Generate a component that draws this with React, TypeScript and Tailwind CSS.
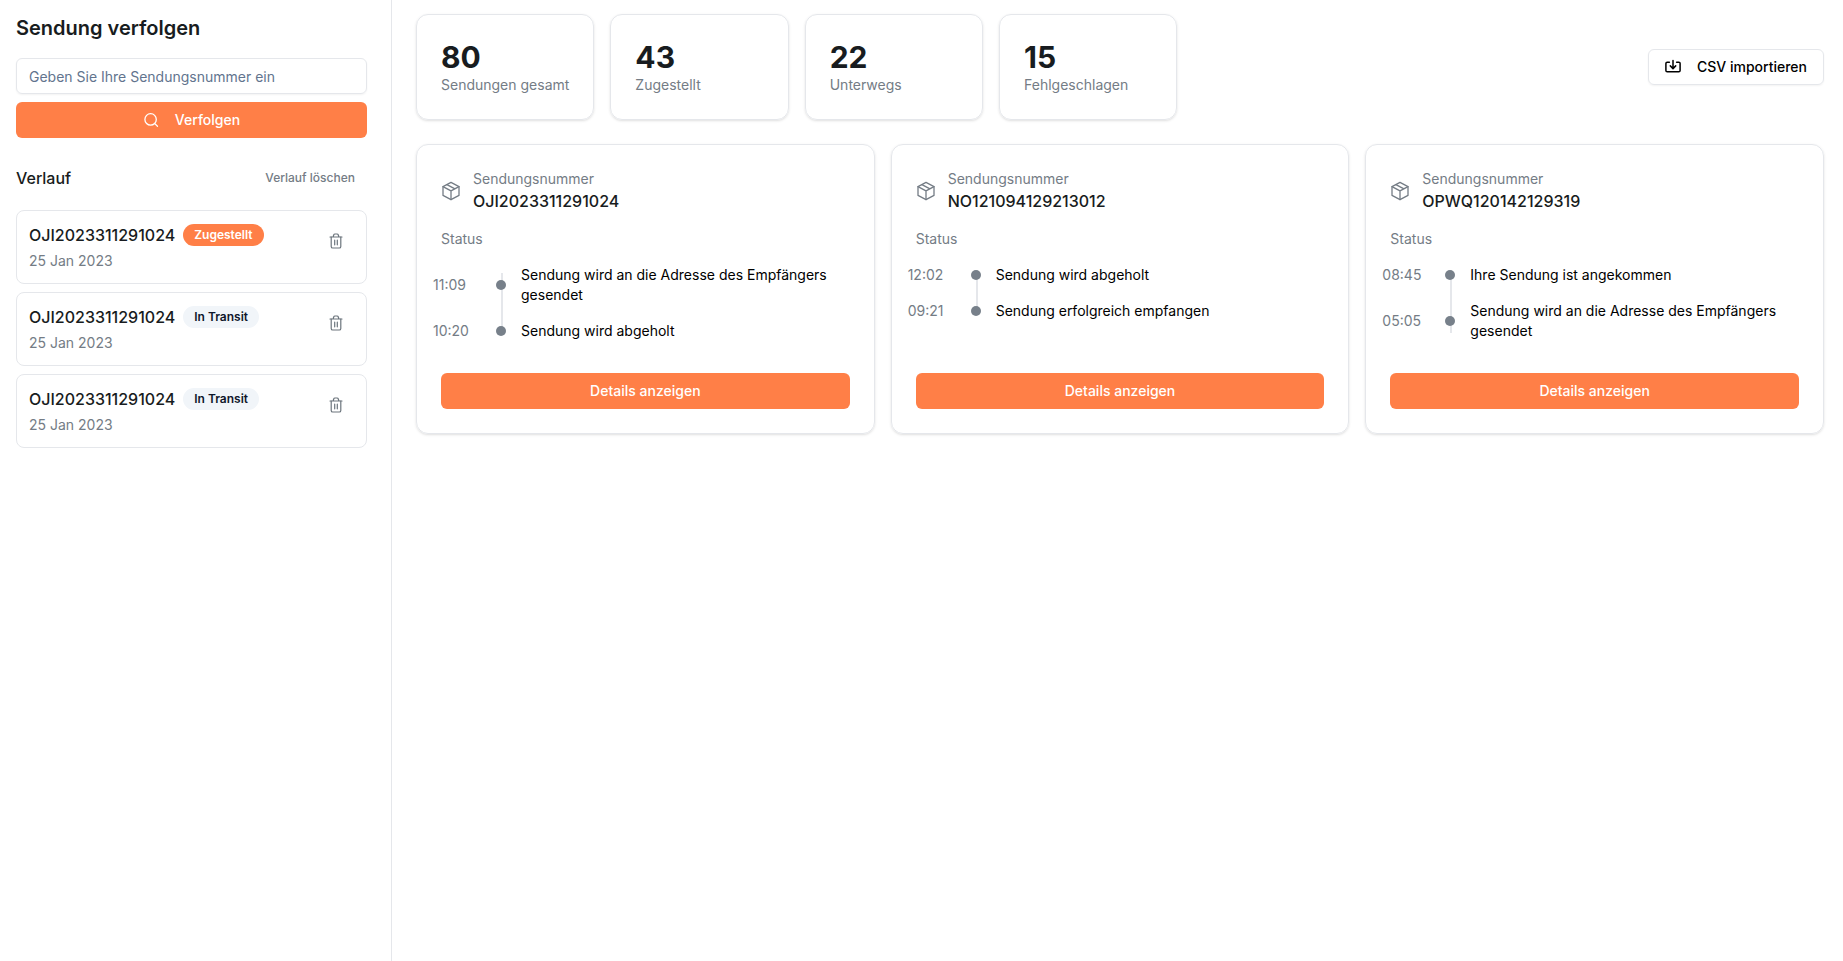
import { useState } from "react";

const stats = [
  { value: 80, label: "Sendungen gesamt" },
  { value: 43, label: "Zugestellt" },
  { value: 22, label: "Unterwegs" },
  { value: 15, label: "Fehlgeschlagen" },
];

const initialHistory = [
  { id: 1, number: "OJI2023311291024", date: "25 Jan 2023", status: "Zugestellt" },
  { id: 2, number: "OJI2023311291024", date: "25 Jan 2023", status: "In Transit" },
  { id: 3, number: "OJI2023311291024", date: "25 Jan 2023", status: "In Transit" },
];

const shipments = [
  {
    number: "OJI2023311291024",
    events: [
      { time: "11:09", text: "Sendung wird an die Adresse des Empfängers gesendet" },
      { time: "10:20", text: "Sendung wird abgeholt" },
    ],
  },
  {
    number: "NO121094129213012",
    events: [
      { time: "12:02", text: "Sendung wird abgeholt" },
      { time: "09:21", text: "Sendung erfolgreich empfangen" },
    ],
  },
  {
    number: "OPWQ120142129319",
    events: [
      { time: "08:45", text: "Ihre Sendung ist angekommen" },
      { time: "05:05", text: "Sendung wird an die Adresse des Empfängers gesendet" },
    ],
  },
];

function SearchIcon() {
  return (
    <svg className="size-4" viewBox="0 0 16 16" fill="none" stroke="currentColor" strokeWidth="1.3" strokeLinecap="round">
      <circle cx="7.6" cy="7.4" r="5.7" />
      <path d="m11.8 11.6 2.7 2.7" />
    </svg>
  );
}

function ImportIcon() {
  return (
    <svg className="size-4" viewBox="0 0 16 16" fill="none" stroke="currentColor" strokeWidth="1.5" strokeLinecap="round" strokeLinejoin="round">
      <path d="M4.4 3.2H2.2c-.8 0-1.3.5-1.3 1.3v7c0 .8.5 1.3 1.3 1.3h11.6c.8 0 1.3-.5 1.3-1.3v-7c0-.8-.5-1.3-1.3-1.3h-2.2" />
      <path d="M8 1.6v7.8M5.3 6.9 8 9.6l2.7-2.7" />
    </svg>
  );
}

function PackageIcon() {
  return (
    <svg className="size-5 text-[#747c85]" viewBox="0 0 20 20" fill="none" stroke="currentColor" strokeWidth="1.3" strokeLinejoin="round" strokeLinecap="round">
      <path d="M10 1.4 18 5.6v8.8L10 18.6 2 14.4V5.6z" />
      <path d="M2 5.6 10 9.8l8-4.2M10 9.8v8.8M5.9 3.6l8.1 4.2" />
    </svg>
  );
}

function TrashIcon() {
  return (
    <svg className="size-4" viewBox="0 0 16 16" fill="none" stroke="currentColor" strokeWidth="1.2" strokeLinecap="round" strokeLinejoin="round">
      <path d="M2 4h12M5.1 4l.6-2c.2-.7.6-1 1.3-1h2c.7 0 1.1.3 1.3 1l.6 2" />
      <path d="M3.2 4v9.4c0 1 .6 1.6 1.6 1.6h6.4c1 0 1.6-.6 1.6-1.6V4M6.7 7.2v4.6M9.3 7.2v4.6" />
    </svg>
  );
}

function StatusBadge({ status }: { status: string }) {
  const color = status === "Zugestellt" ? "bg-[#ff7f47] text-white" : "bg-slate-100 text-slate-900";
  return (
    <span className={`rounded-full border border-transparent px-2.5 py-0.5 text-xs font-semibold ${color}`}>
      {status}
    </span>
  );
}

export default function App() {
  const [query, setQuery] = useState("");
  const [history, setHistory] = useState(initialHistory);

  return (
    <div className="flex min-h-screen bg-white font-['Inter',sans-serif] text-[#181c20]">
      {/* Sidebar */}
      <aside className="w-[392px] shrink-0 border-r border-gray-200 pt-3.5 pr-6 pl-4">
        <h1 className="text-xl font-semibold">Sendung verfolgen</h1>
        <form className="mt-4 flex flex-col gap-2" onSubmit={(e) => e.preventDefault()}>
          <input
            type="text"
            aria-label="Sendungsnummer"
            placeholder="Geben Sie Ihre Sendungsnummer ein"
            value={query}
            onChange={(e) => setQuery(e.target.value)}
            className="h-9 w-full rounded-md border border-gray-200 px-3 text-sm shadow-xs placeholder:text-slate-500"
          />
          <button type="submit" className="flex h-9 items-center justify-center gap-4 rounded-md bg-[#ff7f47] text-sm font-medium text-white">
            <SearchIcon />
            Verfolgen
          </button>
        </form>

        <div className="mt-6 flex items-center justify-between">
          <h2 className="font-medium">Verlauf</h2>
          <button type="button" onClick={() => setHistory([])} className="h-8 px-3 text-xs font-medium text-[#747c85]">
            Verlauf löschen
          </button>
        </div>

        <ul className="mt-4 flex flex-col gap-2">
          {history.map((item) => (
            <li key={item.id} className="flex items-start justify-between rounded-lg border border-gray-200 p-3">
              <div className="flex flex-col gap-1">
                <div className="flex items-center gap-2">
                  <span className="font-medium">{item.number}</span>
                  <StatusBadge status={item.status} />
                </div>
                <span className="text-sm text-[#747c85]">{item.date}</span>
              </div>
              <button
                type="button"
                aria-label="Eintrag löschen"
                onClick={() => setHistory(history.filter((h) => h.id !== item.id))}
                className="flex size-9 items-center justify-center text-[#6c757d]"
              >
                <TrashIcon />
              </button>
            </li>
          ))}
        </ul>
      </aside>

      <main className="min-w-0 flex-1 pt-3.5 pr-[19px] pl-6">
        <div className="flex items-center justify-between">
          <div className="grid grid-cols-4 gap-4">
            {stats.map((stat) => (
              <div key={stat.label} className="rounded-xl border border-gray-200 p-6 shadow-sm">
                <div className="text-3xl font-bold">{stat.value}</div>
                <div className="text-sm text-[#747c85]">{stat.label}</div>
              </div>
            ))}
          </div>
          <button type="button" className="flex h-9 items-center gap-4 rounded-md border border-gray-200 px-4 text-sm font-medium text-black shadow-xs">
            <ImportIcon />
            CSV importieren
          </button>
        </div>

        {/* Shipments */}
        <div className="mt-6 grid grid-cols-3 gap-4">
          {shipments.map((shipment) => (
            <article key={shipment.number} className="flex flex-col rounded-xl border border-gray-200 p-6 shadow-sm">
              <div className="flex items-center gap-3">
                <PackageIcon />
                <div>
                  <div className="text-sm text-[#747c85]">Sendungsnummer</div>
                  <div className="font-medium">{shipment.number}</div>
                </div>
              </div>
              <div className="mt-4 text-sm text-[#747c85]">Status</div>
              <div className="relative mt-4 mb-8 -ml-2">
                <div className="absolute top-2 bottom-2 left-[68px] w-0.5 bg-gray-200" />
                <ul className="flex flex-col gap-4">
                  {shipment.events.map((event) => (
                    <li key={event.time} className="relative flex items-center gap-[15px] text-sm">
                      <span className="w-12 shrink-0 text-[#747c85]">{event.time}</span>
                      <span className="size-2.5 shrink-0 rounded-full bg-[#77808a]" />
                      <span className="text-black">{event.text}</span>
                    </li>
                  ))}
                </ul>
              </div>
              <button type="button" className="mt-auto h-9 rounded-md bg-[#ff7f47] text-sm font-medium text-white">
                Details anzeigen
              </button>
            </article>
          ))}
        </div>
      </main>
    </div>
  );
}
